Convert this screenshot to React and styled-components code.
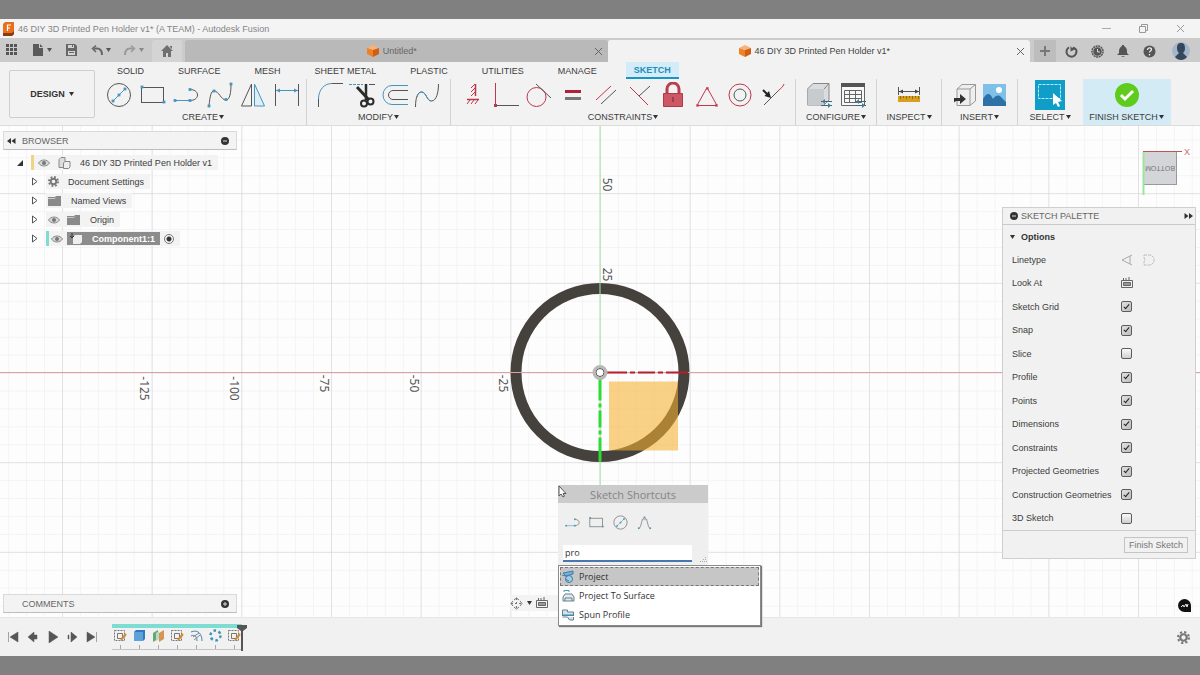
import React, { useState } from "react";
import styled, { createGlobalStyle, css } from "styled-components";

const BLUE = "#4794bd";
const DARK = "#555";
const RED = "#c0364a";

const GlobalStyle = createGlobalStyle`
  * {
    box-sizing: border-box;
  }
  body {
    margin: 0;
    background-color: #808080;
    font-family: "Liberation Sans", Arial, sans-serif;
    font-size: 9px;
    line-height: 12px;
    color: #3c3c3c;
  }
  button {
    padding: 0;
    border: 0;
    background: none;
    font: inherit;
    color: inherit;
    cursor: pointer;
  }
  svg {
    display: block;
    flex: none;
  }
`;

const Screen = styled.div`
  height: 100vh;
  padding: 19px 0;
  display: flex;
  flex-direction: column;
`;

const Row = styled.div`
  display: flex;
  align-items: center;
  gap: ${({ gap = 0 }) => gap}px;
`;

/* ---------- window title ---------- */

const TitleBar = styled.header`
  height: 19px;
  display: flex;
  align-items: center;
  justify-content: space-between;
  padding: 0 14px 0 2px;
  background-color: #f4f4f4;
  color: #858585;
  h1 {
    margin: 0;
    font-size: 9px;
    font-weight: normal;
  }
`;

const WindowButton = styled.button`
  width: 12px;
  height: 12px;
  display: grid;
  place-items: center;
`;

/* ---------- document tabs ---------- */

const TabBar = styled.div`
  height: 24px;
  display: flex;
  align-items: stretch;
  padding-top: 2px;
  background-color: #cbcbcb;
`;

const QuickAccess = styled.div`
  width: 152px;
  padding: 0 8px 2px 6px;
  display: flex;
  align-items: center;
  justify-content: space-between;
  button {
    display: flex;
    align-items: center;
    gap: 3px;
  }
`;

const HomeTab = styled.button`
  width: 30px;
  display: grid;
  place-items: center;
  margin-right: 3px;
  background-color: #d4d4d4;
  border-radius: 3px 3px 0 0;
`;

const DocTab = styled.div`
  flex: 1;
  display: flex;
  align-items: center;
  padding: 0 5px;
  border-radius: 3px 3px 0 0;
  background-color: ${({ active }) => (active ? "#f2f2f2" : "#b9b9b9")};
  color: ${({ active }) => (active ? "#444" : "#666")};
  button:first-child {
    flex: 1;
    display: flex;
    align-items: center;
    justify-content: center;
    gap: 4px;
  }
`;

const TabTools = styled.div`
  width: 170px;
  padding: 0 10px 0 4px;
  display: flex;
  align-items: center;
  button {
    width: 26px;
    height: 20px;
    display: grid;
    place-items: center;
  }
  button:first-child {
    width: 22px;
    height: 100%;
    margin-right: 2px;
    background-color: #bdbdbd;
  }
  button:last-child {
    width: 18px;
    margin-left: auto;
  }
`;

/* ---------- ribbon ---------- */

const Ribbon = styled.div`
  height: 64px;
  display: flex;
  background-color: #f2f2f2;
  border-bottom: 1px solid #dcdcdc;
`;

const DesignButton = styled.button`
  width: 86px;
  height: 48px;
  margin: 8px 5px 0 9px;
  display: flex;
  align-items: center;
  justify-content: center;
  gap: 4px;
  border: 1px solid #cfcfcf;
  border-radius: 2px;
  font-weight: bold;
  color: #333;
`;

const RibbonBody = styled.div`
  flex: 1;
  display: flex;
  flex-direction: column;
`;

const RibbonTabs = styled.nav`
  height: 17px;
  display: flex;
  gap: 24px;
  padding-left: 12px;
`;

const RibbonTab = styled.button`
  height: 17px;
  padding: 0 5px;
  ${({ active }) =>
    active &&
    css`
      padding: 0 8px;
      font-weight: bold;
      color: #1b8fbd;
      background-color: #d3ecf7;
      border-bottom: 2px solid #1795c3;
    `}
`;

const Groups = styled.div`
  flex: 1;
  display: flex;
`;

const Group = styled.section`
  width: ${({ width }) => width}px;
  height: 46px;
  padding: 0 ${({ pad = 10 }) => pad}px;
  border-right: 1px solid ${({ plain }) => (plain ? "transparent" : "#d2d2d2")};
  background-color: ${({ highlight }) => (highlight ? "#d3ebf5" : "transparent")};
  white-space: nowrap;
`;

const GroupIcons = styled.div`
  height: 32px;
  display: flex;
  align-items: center;
  justify-content: ${({ single }) => (single ? "center" : "space-between")};
`;

const GroupLabel = styled.button`
  width: 100%;
  height: 12px;
  display: flex;
  justify-content: center;
  align-items: center;
  gap: 1px;
`;

/* ---------- canvas ---------- */

const Workspace = styled.main`
  flex: 1;
  position: relative;
  z-index: 1;
  background-color: #fdfdfd;
`;

const Sketch = styled.svg`
  position: absolute;
  width: 100%;
  height: 100%;
`;

const SidePanel = styled.div`
  position: absolute;
  left: 3px;
  top: ${({ top }) => top};
  bottom: ${({ bottom }) => bottom};
  width: 234px;
`;

const PanelHeader = styled.div`
  height: 19px;
  display: flex;
  align-items: center;
  justify-content: space-between;
  padding: 0 7px 0 ${({ indent }) => indent}px;
  background-color: #f3f3f3;
  border: 1px solid #dadada;
  border-bottom-color: #bdbdbd;
  color: #666;
`;

const Tree = styled.ul`
  margin: 3px 0 0;
  padding: 0;
  list-style: none;
`;

const TreeRow = styled.li`
  height: 19px;
  display: flex;
  align-items: center;
  gap: 8px;
  padding-left: ${({ indent }) => indent}px;
`;

const TreeChip = styled.div`
  height: 15px;
  display: flex;
  align-items: center;
  gap: ${({ gap }) => gap}px;
  padding: 0 ${({ right = 6 }) => right}px 0 ${({ left = 2 }) => left}px;
  background-color: #f3f3f3;
  border-left: ${({ bar }) => (bar ? `3px solid ${bar}` : "0")};
`;

const Selected = styled.span`
  height: 13px;
  display: flex;
  align-items: center;
  gap: 9px;
  padding: 0 5px 0 2px;
  background-color: #8c8c8c;
  color: #fff;
  font-weight: bold;
`;

const ActiveRadio = styled.input`
  appearance: none;
  width: 10px;
  height: 10px;
  margin: 0;
  border: 1px solid #777;
  border-radius: 50%;
  background: radial-gradient(circle, #333 0 2px, #f8f8f8 3px);
`;

const Palette = styled.aside`
  position: absolute;
  right: 4px;
  top: 81px;
  width: 194px;
  background-color: #f1f1f1;
  border: 1px solid #cfcfcf;
`;

const PaletteHeader = styled.div`
  height: 17px;
  display: flex;
  align-items: center;
  gap: 3px;
  padding: 0 2px 0 7px;
  border-bottom: 1px solid #c9c9c9;
  color: #666;
  span {
    flex: 1;
  }
`;

const PaletteTitle = styled.button`
  height: 23px;
  display: flex;
  align-items: center;
  gap: 6px;
  padding-left: 7px;
  font-weight: bold;
  color: #333;
`;

const Options = styled.div`
  height: 282px;
  display: grid;
  grid-auto-rows: 1fr;
  padding-left: 9px;
`;

const Option = styled.div`
  display: grid;
  grid-template-columns: 109px 1fr;
  align-items: center;
`;

const Check = styled.input`
  appearance: none;
  width: 11px;
  height: 11px;
  margin: 0;
  display: grid;
  place-items: center;
  border: 1px solid #5c5c5c;
  border-radius: 2px;
  background: linear-gradient(#fafafa, #cfcfcf);
  &:checked {
    background: linear-gradient(135deg, #e2e2e2, #bdbdbd);
  }
  &:checked::after {
    content: "";
    width: 2px;
    height: 5px;
    margin-bottom: 2px;
    border: solid #222;
    border-width: 0 1px 1px 0;
    transform: rotate(40deg);
  }
`;

const PaletteFooter = styled.div`
  height: 28px;
  display: flex;
  align-items: center;
  justify-content: flex-end;
  padding-right: 7px;
  border-top: 1px solid #cdcdcd;
  button {
    height: 16px;
    padding: 0 4px;
    border: 1px solid #c4c4c4;
    color: #777;
  }
`;

const NavBar = styled.div`
  position: absolute;
  left: 50%;
  bottom: 6px;
  width: 180px;
  height: 16px;
  margin-left: -90px;
  display: flex;
  align-items: center;
  gap: 4px;
  background-color: #f3f3f3;
`;

const ChatBadge = styled.button`
  position: absolute;
  right: 9px;
  bottom: 5px;
`;

/* ---------- shortcuts popup ---------- */

const Shortcuts = styled.div`
  position: absolute;
  left: calc(50% - 42px);
  top: 359px;
  font-family: "Open Sans", sans-serif;
`;

const ShortcutBox = styled.div`
  width: 150px;
  height: 80px;
  background-color: #efefef;
  h2 {
    height: 18px;
    margin: 0;
    font-size: 11px;
    line-height: 19px;
    font-weight: normal;
    text-align: center;
    color: #858585;
    background-color: #cbcbcb;
  }
`;

const ShortcutIcons = styled.div`
  height: 38px;
  padding-left: 7px;
  display: flex;
  align-items: center;
  gap: 9px;
`;

const SearchRow = styled.div`
  display: flex;
  align-items: flex-end;
  padding: 4px 0 0 5px;
  gap: 8px;
`;

const SearchInput = styled.input`
  width: 129px;
  height: 17px;
  padding: 0 2px;
  border: 0;
  border-bottom: 2px solid #4a78ad;
  outline: 0;
  background-color: #fff;
  font-family: inherit;
  font-size: 9px;
  color: #333;
`;

const Results = styled.ul`
  width: 203px;
  margin: 0;
  padding: 1px;
  list-style: none;
  background-color: #fff;
  border: 1px solid #8a8a8a;
  box-shadow: 1px 1px 1px #777;
`;

const Result = styled.li`
  height: 19px;
  border: 1px ${({ active }) => (active ? "dashed #777" : "solid transparent")};
  background-color: ${({ active }) => (active ? "#c6c6c6" : "#fff")};
  button {
    width: 100%;
    height: 17px;
    display: flex;
    align-items: center;
    gap: 4px;
    color: #333;
  }
`;

const Pointer = styled.svg`
  position: absolute;
  left: 0;
  top: 0;
`;

/* ---------- timeline ---------- */

const Timeline = styled.footer`
  height: 39px;
  display: flex;
  align-items: center;
  padding: 0 10px 0 7px;
  background-color: #f1f1f1;
  border-top: 1px solid #e6e6e6;
`;

const Playback = styled.div`
  width: 91px;
  margin-right: 14px;
  display: flex;
  justify-content: space-between;
`;

const Track = styled.div`
  position: relative;
  width: 130px;
  height: 27px;
  border-top: 4px solid #7fdcd2;
`;

const Features = styled.div`
  height: 22px;
  display: flex;
  justify-content: space-between;
  border-bottom: 1px solid #c4c4c4;
`;

const Feature = styled.button`
  width: 16px;
  display: flex;
  flex-direction: column;
  align-items: center;
  justify-content: space-between;
  &::after {
    content: "";
    width: 1px;
    height: 4px;
    background-color: #a8a8a8;
  }
`;

const Marker = styled.svg`
  position: absolute;
  right: -5px;
  top: -3px;
`;

const Spacer = styled.div`
  flex: 1;
`;

/* ---------- icons ---------- */

const Ico = ({ s = 26, w, h, box, children, ...rest }) => (
  <svg
    width={w || s}
    height={h || s}
    viewBox={box || `0 0 ${w || s} ${h || s}`}
    fill="none"
    stroke={DARK}
    aria-hidden="true"
    {...rest}
  >
    {children}
  </svg>
);

const Caret = ({ color = "#333" }) => (
  <Ico w={5} h={4} stroke="none">
    <path d="M0 0h5L2.5 4z" fill={color} />
  </Ico>
);

const Dots = ({ at, r = 1.4 }) =>
  at.map(([x, y]) => (
    <rect key={`${x}-${y}`} x={x - r} y={y - r} width={r * 2} height={r * 2} fill={BLUE} stroke="none" />
  ));

const CircleIcon = ({ s }) => (
  <Ico s={s} box="0 0 26 26">
    <circle cx="13" cy="13" r="11.5" />
    <path d="M7 19 19 7" stroke={BLUE} />
    <Dots at={[[7, 19], [13, 13], [19, 7]]} />
  </Ico>
);
const RectIcon = ({ s }) => (
  <Ico s={s} box="0 0 26 26">
    <rect x="1.5" y="5.5" width="22" height="15" />
    <Dots at={[[2, 5], [24, 20]]} />
  </Ico>
);
const LineIcon = ({ s }) => (
  <Ico s={s} box="0 0 26 26">
    <path d="M1.500 18.500H17" stroke={BLUE} />
    <path d="M17 18.500c4 0 7.500-2 7.500-5.500S21 7.500 17 7.500" />
    <Dots at={[[2, 18.5], [17, 18.5], [17, 7.5]]} />
  </Ico>
);
const SplineIcon = () => (
  <Ico>
    <path d="M2 24C3 14 4 9 7 9c5 0 7 9 12 9 4 0 5-8 5-16" />
    <Dots at={[[2, 24], [7, 9], [19, 17.5], [24, 2]]} />
  </Ico>
);
const ArcIcon = ({ s }) => (
  <Ico s={s} box="0 0 26 26">
    <path d="M3 23c5 0 4-18 10-18s5 18 10 18" />
    <path d="M8 8h10" stroke="#999" />
    <Dots at={[[3, 23], [13, 4], [23, 23]]} />
  </Ico>
);
const MirrorIcon = () => (
  <Ico>
    <path d="M11.500 2v22H1.500z" />
    <path d="M14.500 2v22h10z" stroke={BLUE} fill="#ddeef6" />
  </Ico>
);
const DimensionIcon = () => (
  <Ico>
    <path d="M1.500 2v22M24.500 2v22" />
    <path d="M2 8.500h22" stroke={BLUE} />
    <path d="m2 8.500 4-2v4zM24 8.500l-4-2v4z" fill={BLUE} stroke="none" />
  </Ico>
);
const FilletIcon = () => (
  <Ico>
    <path d="M1.500 17C1.500 8 7 1.500 15 1.500" stroke={BLUE} />
    <path d="M1.500 25v-8M15 1.500h11" />
  </Ico>
);
const TrimIcon = () => (
  <Ico>
    <path d="M0 2.500h14" stroke={BLUE} strokeDasharray="3 1" />
    <path d="M20 2.500h6" />
    <g stroke="#2b2b2b">
      <path d="M8 5 20 18" strokeWidth="3" />
      <path d="M17 2v16" strokeWidth="2.500" />
      <circle cx="15" cy="21.500" r="3" strokeWidth="2" />
      <circle cx="21.500" cy="19.500" r="3" strokeWidth="2" />
    </g>
  </Ico>
);
const OffsetIcon = () => (
  <Ico stroke={BLUE}>
    <path d="M26 3.500H10a9 9.500 0 0 0 0 19h16" />
    <path d="M26 8.500H11a4.500 4.500 0 0 0 0 9h15" stroke={DARK} />
  </Ico>
);
const CurveIcon = () => (
  <Ico>
    <path d="M1.500 25c0-9 2-15 6-15 5 0 5 9 10 9 5 0 7-9 7-17" />
    <path d="M3 15c1-3 2-5 4.500-5 5 0 5 9 10 9" stroke={BLUE} />
  </Ico>
);
const FixHVIcon = () => (
  <Ico>
    <path d="M16.500 2v12M8 17.500h12" stroke={RED} strokeWidth="1.500" />
    <path d="m12 6 4-4M12 10l4-4M12 14l4-4M8 22l3-4M12 22l3-4M16 22l3-4" stroke={RED} />
  </Ico>
);
const PerpendicularIcon = () => (
  <Ico>
    <path d="M2.500 1v23" stroke={RED} />
    <path d="M3 23.500h23" />
    <rect x="1" y="22" width="3" height="3" fill={RED} stroke="none" />
  </Ico>
);
const TangentIcon = () => (
  <Ico>
    <circle cx="10.500" cy="15" r="9.500" stroke={RED} />
    <path d="m10 2 15 14" />
  </Ico>
);
const EqualIcon = () => (
  <Ico stroke="none">
    <path d="M5 8h16v3H5z" fill="#b01f3b" />
    <path d="M5 15h16v3H5z" fill="#777" />
  </Ico>
);
const ParallelIcon = () => (
  <Ico>
    <path d="M3 18 18 4" stroke={RED} />
    <path d="M8 22 23 8" />
  </Ico>
);
const VertexIcon = () => (
  <Ico>
    <path d="m3 5 18 18" stroke={RED} />
    <path d="M12 14 23 4" />
  </Ico>
);
const LockIcon = () => (
  <Ico stroke="none">
    <path d="M7 12V7a6 6 0 0 1 12 0v5" stroke="#b83f50" strokeWidth="3" fill="none" />
    <path d="M3.500 11.500h19v13h-19z" fill="#cc5865" stroke="#b33948" />
    <path d="M12.500 15h1v5h-1z" fill="#7c1f2c" />
  </Ico>
);
const TriangleIcon = () => (
  <Ico stroke={RED}>
    <path d="M13 5.500 3 23.500h20z" />
    <path d="M2 22h3v3H2zM21 22h3v3h-3zM12 5h3v3h-3z" fill={RED} stroke="none" opacity=".5" />
  </Ico>
);
const ConcentricIcon = () => (
  <Ico>
    <circle cx="13" cy="13" r="11" stroke={RED} />
    <circle cx="13" cy="13" r="6" />
  </Ico>
);
const CurvatureIcon = () => (
  <Ico>
    <path d="M3 23 17 9" />
    <path d="M17 9c3-3 5-4 6-7" stroke={RED} />
    <path d="m2 8 5 5" stroke="#222" strokeWidth="2" />
    <path d="M10 16 3.500 14 8 9z" fill="#222" stroke="none" />
  </Ico>
);
const Tune = () => (
  <>
    <path d="M15 19.500h11M15 23.500h11" stroke="#3f6573" />
    <path d="m19 17-3 2.500 3 2.500zM22 21l3 2.500-3 2.500z" fill="#3f7f96" stroke="none" />
  </>
);
const ConfigBoxIcon = () => (
  <Ico stroke="#888">
    <path d="M1.500 7 7 1.500h16V18l-5 5H1.500z" fill="#dcdcdc" />
    <path d="M1.500 7H18v16H1.500z" fill="#c8cbcd" stroke="none" />
    <path d="m18 7 5-5.500" />
    <Tune />
  </Ico>
);
const ConfigTableIcon = () => (
  <Ico stroke="#666">
    <path d="M1.500 1.500h23v22h-23z" fill="#f8f8f8" />
    <path d="M1 1h24v4H1z" fill="#555" stroke="none" />
    <path d="M4.500 8.500h17v12h-17zM4.500 12.500h17M4.500 16.500h17M9.500 9v11M15.500 9v11" />
    <Tune />
  </Ico>
);
const MeasureIcon = () => (
  <Ico>
    <path d="M2.500 5v8M23.500 5v8M3 9.500h20" />
    <path d="m3 9.500 4-2v4zM23 9.500l-4-2v4z" fill="#444" stroke="none" />
    <path d="M2 14h22v6H2z" fill="#d99f1d" stroke="none" />
    <path d="M4.500 17v-3M7.500 16v-2M10.500 17v-3M13.500 16v-2M16.500 17v-3M19.500 16v-2M22.500 17v-3" stroke="#8f6a17" />
  </Ico>
);
const InsertBoxIcon = () => (
  <Ico stroke="#999">
    <path d="m5 7 5-4.500h13.500V19L18 23.500H5z" fill="#eee" />
    <path d="M5 7h13v16M18 7l5.500-4.500" />
    <path d="M2 21v-5h6v-4l6 5-6 5v-3H5c-2 0-3 1-3 2z" fill="#333" stroke="none" />
  </Ico>
);
const ImageIcon = () => (
  <Ico stroke="none">
    <path d="M2 2h23v22H2z" fill="#7fc0e8" />
    <circle cx="18" cy="8" r="3" fill="#fff" />
    <path d="M2 17c4-7 7-6 10 0 2-3 5-5 8-2l5 5v4H2z" fill="#2c72a6" />
  </Ico>
);
const SelectIcon = () => (
  <Ico s={30} stroke="none">
    <path d="M0 0h30v30H0z" fill="#109dc7" />
    <path d="M3.500 4.500h22v14h-22z" stroke="#bfeaf7" strokeDasharray="3 1" />
    <path d="M18 13v12l3-2 2 4 2-1-2-4 4-1z" fill="#fff" />
  </Ico>
);
const FinishIcon = () => (
  <Ico stroke="none">
    <circle cx="13" cy="13" r="12" fill="#5fcb1c" />
    <path d="m7 13 4 4 8-8" stroke="#fff" strokeWidth="3" />
  </Ico>
);

const FusionLogo = () => (
  <Ico w={12} h={14} stroke="none">
    <path d="M1 2 3 0h9v12l-2 2H1z" fill="#e8701c" />
    <path d="M1 11h9l2-2v3l-2 2H1z" fill="#8c3b10" />
    <path d="M5 3h4M5 6h3M5.500 3v6" stroke="#fff" strokeWidth="1.200" />
  </Ico>
);
const CubeIcon = () => (
  <Ico s={12} stroke="none">
    <path d="M6 0 12 3 6 5 0 3z" fill="#f7b27a" />
    <path d="m0 3 6 2v7L0 9z" fill="#ef8226" />
    <path d="m12 3-6 2v7l6-3z" fill="#cf5f12" />
  </Ico>
);
const CloseIcon = ({ color = "#666" }) => (
  <Ico s={9} stroke={color}>
    <path d="m1 1 7 7M8 1 1 8" />
  </Ico>
);
const AppsIcon = () => (
  <Ico s={12} stroke="none">
    {[0, 4, 8].map(y =>
      [0, 4, 8].map(x => <rect key={`${x}${y}`} x={x} y={y} width="3" height="3" fill="#555" />)
    )}
  </Ico>
);
const FileIcon = () => (
  <Ico s={12} stroke="none">
    <path d="M1 0h6v4h4v8H1zM8 0l3 3H8z" fill="#5a5a5a" />
  </Ico>
);
const SaveIcon = () => (
  <Ico s={12} stroke="none">
    <path d="M1 0h9l2 2v10H1z" fill="#666" />
    <path d="M3 1h6v3H3zM3 7h7v4H3z" fill="#d4d4d4" />
    <path d="M7 1h1v2H7zM4 8h5v1H4z" fill="#666" />
  </Ico>
);
const UndoIcon = ({ flip }) => (
  <Ico s={12} stroke={flip ? "#999" : "#666"} transform={flip ? "scale(-1 1)" : undefined}>
    <path d="M3 4.500h3c3 0 5 2 5 6.500" strokeWidth="2" />
    <path d="M5 1.500 1.500 4.500 5 8" strokeWidth="1.500" />
  </Ico>
);
const HomeIcon = () => (
  <Ico s={12} stroke="none">
    <path d="M6 0 12 6h-2v6H7V8H5v4H2V6H0zM9 1h2v3L9 2z" fill="#707070" />
  </Ico>
);
const SyncIcon = () => (
  <Ico s={13} strokeWidth="2">
    <path d="M4 2.300a5 5 0 1 0 6 .8" />
    <path d="M5.500 1v5.500L11 4 9 1.500 7 3z" fill="#555" stroke="none" />
  </Ico>
);
const ClockIcon = () => (
  <Ico s={13} strokeWidth="1.500">
    <circle cx="6.500" cy="6.500" r="5.500" strokeDasharray="2 .6" />
    <circle cx="6.500" cy="6.500" r="3.500" fill="#555" />
    <path d="M6.500 4v3H9" stroke="#ddd" strokeWidth="1" />
  </Ico>
);
const BellIcon = () => (
  <Ico s={12} stroke="none">
    <path d="M5 0h2v1c2 1 3 3 3 5v2l2 2H0l2-2V6c0-2 1-4 3-5zM4 11h4l-2 1z" fill="#555" />
  </Ico>
);
const HelpIcon = () => (
  <Ico s={13} stroke="none">
    <circle cx="6.500" cy="6.500" r="6" fill="#555" />
    <path d="M4.500 5c0-3 4-2.500 4-.5 0 1.500-2 1.500-2 3M6.500 9v1.500" stroke="#eee" strokeWidth="1.300" />
  </Ico>
);
const AvatarIcon = () => (
  <Ico s={18} stroke="none">
    <circle cx="9" cy="9" r="9" fill="#a5b6ca" />
    <path d="M9 1c3 0 4 2 4 5s-1 4-2 5l4 4c-3 4-9 4-12 0l4-4C6 10 5 9 5 6s1-5 4-5z" fill="#34475d" />
  </Ico>
);

const EyeIcon = () => (
  <Ico w={12} h={8} stroke="#8a8a8a">
    <path d="M.5 4C3 0 9 0 11.500 4 9 8 3 8 .5 4z" fill="#d8d8d8" />
    <circle cx="6" cy="4" r="2" fill="#777" stroke="none" />
  </Ico>
);
const FolderIcon = () => (
  <Ico w={13} h={10} stroke="none">
    <path d="M0 1h7l1-1h5v10H0z" fill="#8a8a8a" />
    <path d="M0 2.500h7l1-1" stroke="#c8c8c8" />
  </Ico>
);
const GearIcon = ({ s = 11, fill = "#777" }) => (
  <Ico s={s} box="0 0 12 12" stroke={fill}>
    <circle cx="6" cy="6" r="3" strokeWidth="2" />
    <circle cx="6" cy="6" r="5" strokeWidth="2" strokeDasharray="2 1.930" />
  </Ico>
);
const DocIcon = () => (
  <Ico w={13} h={12} stroke="#888">
    <path d="M1 2.500 3 .5h4v10H1z" fill="#ddd" />
    <path d="M5.500 6 7 4.500h5V10l-1.500 1.500h-5z" fill="#eee" />
  </Ico>
);
const ComponentIcon = () => (
  <Ico w={14} h={12} stroke="none">
    <path d="m4 4 2-2h7v7l-2 2H4z" fill="#eee" />
    <path d="M3 0v5M1 3l2 2 2-2" stroke="#333" />
  </Ico>
);
const ArrowRight = () => (
  <Ico w={6} h={9}>
    <path d="M.5 1v7L5 4.500z" />
  </Ico>
);
const ArrowOpen = () => (
  <Ico s={6} stroke="none">
    <path d="M6 0v6H0z" fill="#333" />
  </Ico>
);
const RoundIcon = ({ plus }) => (
  <Ico s={8} stroke="none">
    <circle cx="4" cy="4" r="4" fill="#333" />
    <path d={plus ? "M2 4h4M4 2v4" : "M2 4h4"} stroke="#ddd" />
  </Ico>
);
const DoubleArrow = ({ right }) => (
  <Ico w={9} h={6} stroke="none" transform={right ? "scale(-1 1)" : undefined}>
    <path d="M0 3 4 0v6zM4.500 3l4-3v6z" fill="#333" />
  </Ico>
);
const LookAtIcon = () => (
  <Ico s={12} stroke="#666">
    <path d="M.5 3.500h11v7H.5zM8 0v3M5 1v2M2.500 1v2" />
    <path d="M2.500 5.500h7v3h-7z" fill="#999" />
  </Ico>
);

const ProjectIcon = () => (
  <Ico s={14} stroke="#3d7dad">
    <path d="M2 3 12 1v3L5 6zM1 5l7 2" fill="#78aed6" />
    <circle cx="8" cy="9" r="3.500" fill="#a7cbe4" />
    <path d="m4 9 4 2" />
  </Ico>
);
const SurfaceIcon = () => (
  <Ico s={14} stroke="#68818f">
    <path d="M2 12V8l2-3h7l2 3v4zM4 9h7M4 9v3M11 9v3" fill="#e3e9ec" />
    <path d="M3 3V1.500h5V3" stroke="#4b9cb3" />
  </Ico>
);
const SpunIcon = () => (
  <Ico s={14} stroke="#68818f">
    <path d="M1.500 2h5v2h6v3H1.500zM1.500 9h5l2 3h4V9" fill="#cfe4ec" />
    <path d="M1 7.500h12" stroke="#2f95a8" />
  </Ico>
);

const SketchFeature = () => (
  <Ico s={15} stroke="#777">
    <path d="M1.500 2.500h10v10h-10z" strokeDasharray="2 1" />
    <path d="M4.500 5.500h5v5h-5z" />
    <path d="m8 12 5-6" stroke="#d28b2c" strokeWidth="2" />
  </Ico>
);
const ExtrudeFeature = () => (
  <Ico s={15} stroke="none">
    <path d="m2 4 2-2h9v9l-2 2H2z" fill="#3379bd" />
    <path d="M2 4h9v9H2z" fill="#5ea2dc" />
  </Ico>
);
const PlaneFeature = () => (
  <Ico s={15} stroke="none">
    <path d="m2 5 5-3v9l-5 3z" fill="#62a978" />
    <path d="m8 5 5-3v9l-5 3z" fill="#d99355" />
    <path d="m5 5 3-2v8l-3 2z" fill="#b7dcc2" />
  </Ico>
);
const SweepFeature = () => (
  <Ico s={15} stroke="#4583ae">
    <path d="M2 4c7-3 11 2 11 9M2 8c4-2 6 1 6 5" />
    <path d="m4 9 6-4M5 12l6-5" stroke="#888" />
  </Ico>
);
const PatternFeature = () => (
  <Ico s={15} stroke="#3f95b8" strokeWidth="2.500">
    <circle cx="7.500" cy="7.500" r="5" strokeDasharray="2.600 2.630" />
  </Ico>
);

/* ---------- data ---------- */

const ribbonTabs = ["SOLID", "SURFACE", "MESH", "SHEET METAL", "PLASTIC", "UTILITIES", "MANAGE", "SKETCH"];

const groups = [
  { label: "CREATE", width: 207, pad: 6, icons: [CircleIcon, RectIcon, LineIcon, SplineIcon, MirrorIcon, DimensionIcon] },
  { label: "MODIFY", width: 144, icons: [FilletIcon, TrimIcon, OffsetIcon, CurveIcon] },
  {
    label: "CONSTRAINTS",
    width: 345,
    pad: 8,
    icons: [
      FixHVIcon,
      PerpendicularIcon,
      TangentIcon,
      EqualIcon,
      ParallelIcon,
      VertexIcon,
      LockIcon,
      TriangleIcon,
      ConcentricIcon,
      CurvatureIcon
    ]
  },
  { label: "CONFIGURE", width: 81, icons: [ConfigBoxIcon, ConfigTableIcon] },
  { label: "INSPECT", width: 65, icons: [MeasureIcon] },
  { label: "INSERT", width: 76, icons: [InsertBoxIcon, ImageIcon] },
  { label: "SELECT", width: 65, plain: 1, icons: [SelectIcon] },
  { label: "FINISH SKETCH", width: 88, pad: 0, plain: 1, highlight: 1, icons: [FinishIcon] }
];

const paletteOptions = [
  ["Sketch Grid", true],
  ["Snap", true],
  ["Slice", false],
  ["Profile", true],
  ["Points", true],
  ["Dimensions", true],
  ["Constraints", true],
  ["Projected Geometries", true],
  ["Construction Geometries", true],
  ["3D Sketch", false]
];

const results = [
  ["Project", ProjectIcon],
  ["Project To Surface", SurfaceIcon],
  ["Spun Profile", SpunIcon]
];

const features = [
  SketchFeature,
  ExtrudeFeature,
  PlaneFeature,
  SketchFeature,
  SweepFeature,
  PatternFeature,
  SketchFeature
];

const playback = [
  ["First", "M1.500 1v10M11 1v10L3 6z"],
  ["Previous", "M1 6l6-5v10zM7 4h3v4H7z"],
  ["Play", "M2 0v12l9-6z"],
  ["Next", "M11 6 5 1v10zM2 4h1v4H2z"],
  ["Last", "M10.500 1v10M1 1v10l8-5z"]
];

const rulerLabels = [
  [-460, 16, "-125"],
  [-370, 16, "-100"],
  [-280, 11, "-75"],
  [-190, 11, "-50"],
  [-101, 11, "-25"],
  [3, -188, "50"],
  [3, -98, "25"]
];

/* ---------- sketch drawing, origin at the centre of the ring ---------- */

const STEP = 89.67;

const SketchCanvas = () => (
  <Sketch>
    <defs>
      <pattern id="minor" width={STEP / 5} height={STEP / 5} patternUnits="userSpaceOnUse">
        <path d={`M0 0H${STEP}M0 0V${STEP}`} stroke="#ececec" fill="none" />
      </pattern>
      <pattern id="major" width={STEP} height={STEP} patternUnits="userSpaceOnUse">
        <path d={`M0 0H${STEP}M0 0V${STEP}`} stroke="#d0d0d0" fill="none" />
      </pattern>
    </defs>
    <svg x="50%" y="246.5" overflow="visible">
      <rect x="-2000" y="-1000" width="4000" height="2000" fill="url(#minor)" />
      <rect x="-2000" y="-1000" width="4000" height="2000" fill="url(#major)" />
      <circle r="84" fill="none" stroke="#45413d" strokeWidth="11" />
      <path d="M-2000 0H2000" stroke="#dda0a4" />
      <path d="M0-1000V120" stroke="#a6e3ab" />
      <rect x="9" y="9" width="69" height="69" fill="#f5b030" fillOpacity=".58" />
      <path d="M6 0h21m3 0h5m3 0h17m3 0h5m3 0h22" stroke="#b81f2b" strokeWidth="2" />
      <path d="M0 6v22m0 3v4m0 3v17m0 3v4m0 3v24" stroke="#2ddb35" strokeWidth="3" />
      <circle r="6" fill="#fff" stroke="#b9b9b9" strokeWidth="3" />
      <circle r="4" fill="#fff" stroke="#555" />
      <g fontSize="12" fill="#555" textAnchor="middle" fontFamily="Noto Sans">
        {rulerLabels.map(([x, y, label]) => (
          <text key={label} transform={`translate(${x} ${y}) rotate(90)`}>
            {label}
          </text>
        ))}
      </g>
    </svg>
    <svg x="100%" overflow="visible">
      <rect x="-56.5" y="25.5" width="33" height="33" fill="#d3d5d8" stroke="#999" />
      <path d="M-57 25.500h39" stroke="#bd5555" />
      <path d="M-56.500 26v43" stroke="#9be59f" strokeWidth="2" />
      <text transform="translate(-40 40) rotate(180)" fontSize="7" textAnchor="middle" fill="#777">
        BOTTOM
      </text>
      <text x="-16" y="29" fontSize="9" fill="#cf6b78">
        X
      </text>
    </svg>
  </Sketch>
);

const TreeItem = ({ indent, open, children }) => (
  <TreeRow indent={indent}>
    {open ? <ArrowOpen /> : <ArrowRight />}
    {children}
  </TreeRow>
);

const Browser = () => (
  <SidePanel top="5px">
    <PanelHeader indent={3}>
      <Row gap={6}>
        <DoubleArrow />
        BROWSER
      </Row>
      <RoundIcon />
    </PanelHeader>
    <Tree>
      <TreeItem indent={14} open>
        <TreeChip bar="#f0d480" gap={9} left={4}>
          <Row gap={8}>
            <EyeIcon />
            <DocIcon />
          </Row>
          46 DIY 3D Printed Pen Holder v1
        </TreeChip>
      </TreeItem>
      <TreeItem indent={29}>
        <TreeChip gap={9}>
          <GearIcon />
          Document Settings
        </TreeChip>
      </TreeItem>
      <TreeItem indent={29}>
        <TreeChip gap={10}>
          <FolderIcon />
          Named Views
        </TreeChip>
      </TreeItem>
      <TreeItem indent={29}>
        <TreeChip gap={10}>
          <Row gap={7}>
            <EyeIcon />
            <FolderIcon />
          </Row>
          Origin
        </TreeChip>
      </TreeItem>
      <TreeItem indent={29}>
        <TreeChip bar="#7fdcd2" gap={4}>
          <EyeIcon />
          <Selected>
            <ComponentIcon />
            Component1:1
          </Selected>
          <ActiveRadio type="radio" defaultChecked aria-label="Activate Component1:1" />
        </TreeChip>
      </TreeItem>
    </Tree>
  </SidePanel>
);

const SketchPalette = () => (
  <Palette>
    <PaletteHeader>
      <RoundIcon />
      <span>SKETCH PALETTE</span>
      <DoubleArrow right />
    </PaletteHeader>
    <PaletteTitle>
      <Caret />
      Options
    </PaletteTitle>
    <Options>
      <Option>
        Linetype
        <Row gap={10}>
          <Ico s={12} stroke="#aaa">
            <path d="M11 1 1 6l10 5M9 2v8" />
          </Ico>
          <Ico s={12} stroke="#bbb" strokeDasharray="3 1">
            <path d="M1 1h7l3 3v4l-3 3H1V8l1-2-1-2z" />
          </Ico>
        </Row>
      </Option>
      <Option>
        Look At
        <LookAtIcon />
      </Option>
      {paletteOptions.map(([label, checked]) => (
        <Option as="label" key={label}>
          {label}
          <Check type="checkbox" defaultChecked={checked} />
        </Option>
      ))}
    </Options>
    <PaletteFooter>
      <button>Finish Sketch</button>
    </PaletteFooter>
  </Palette>
);

const SketchShortcuts = () => {
  const [query, setQuery] = useState("pro");
  return (
    <Shortcuts>
      <ShortcutBox>
        <h2>Sketch Shortcuts</h2>
        <ShortcutIcons>
          <LineIcon s={15} />
          <RectIcon s={15} />
          <CircleIcon s={15} />
          <ArcIcon s={15} />
        </ShortcutIcons>
        <SearchRow>
          <SearchInput
            aria-label="Search shortcuts"
            value={query}
            onChange={e => setQuery(e.target.value)}
          />
          <Ico s={7} stroke="#aaa" strokeDasharray="1 1">
            <path d="M0 6.500h7M3 4.500h4M5 2.500h2" />
          </Ico>
        </SearchRow>
      </ShortcutBox>
      <Results>
        {results.map(([label, Icon], i) => (
          <Result key={label} active={i === 0 ? 1 : undefined}>
            <button>
              <Icon />
              {label}
            </button>
          </Result>
        ))}
      </Results>
      <Pointer width="9" height="13" viewBox="0 0 9 13">
        <path d="M1 1v10l2-2 2 3 1.500-.8L5 8.500h3z" fill="#fff" stroke="#555" />
      </Pointer>
    </Shortcuts>
  );
};

export default function App() {
  return (
    <>
      <GlobalStyle />
      <Screen>
        <TitleBar>
          <Row gap={4}>
            <FusionLogo />
            <h1>46 DIY 3D Printed Pen Holder v1* (A TEAM) - Autodesk Fusion</h1>
          </Row>
          <Row gap={25}>
            <WindowButton aria-label="Minimize">
              <Ico s={9} stroke="#aaa">
                <path d="M0 4.500h9" />
              </Ico>
            </WindowButton>
            <WindowButton aria-label="Restore">
              <Ico s={9} stroke="#999">
                <path d="M.5 2.500h6v6h-6zM2.500 2V.5h6v6H7" />
              </Ico>
            </WindowButton>
            <WindowButton aria-label="Close">
              <CloseIcon color="#999" />
            </WindowButton>
          </Row>
        </TitleBar>

        <TabBar>
          <QuickAccess>
            <button aria-label="Data panel">
              <AppsIcon />
            </button>
            <button aria-label="File">
              <FileIcon />
              <Caret color="#555" />
            </button>
            <button aria-label="Save">
              <SaveIcon />
            </button>
            <button aria-label="Undo">
              <UndoIcon />
              <Caret color="#555" />
            </button>
            <button aria-label="Redo">
              <UndoIcon flip />
              <Caret color="#888" />
            </button>
          </QuickAccess>
          <HomeTab aria-label="Home">
            <HomeIcon />
          </HomeTab>
          <DocTab>
            <button>
              <CubeIcon />
              Untitled*
            </button>
            <button aria-label="Close tab">
              <CloseIcon />
            </button>
          </DocTab>
          <DocTab active={1}>
            <button>
              <CubeIcon />
              46 DIY 3D Printed Pen Holder v1*
            </button>
            <button aria-label="Close tab">
              <CloseIcon />
            </button>
          </DocTab>
          <TabTools>
            <button aria-label="New tab">
              <Ico s={10} strokeWidth="2" stroke="#777">
                <path d="M5 0v10M0 5h10" />
              </Ico>
            </button>
            <button aria-label="Job status">
              <SyncIcon />
            </button>
            <button aria-label="Extensions">
              <ClockIcon />
            </button>
            <button aria-label="Notifications">
              <BellIcon />
            </button>
            <button aria-label="Help">
              <HelpIcon />
            </button>
            <button aria-label="Account">
              <AvatarIcon />
            </button>
          </TabTools>
        </TabBar>

        <Ribbon>
          <DesignButton>
            DESIGN
            <Caret />
          </DesignButton>
          <RibbonBody>
            <RibbonTabs>
              {ribbonTabs.map(tab => (
                <RibbonTab key={tab} active={tab === "SKETCH" ? 1 : undefined}>
                  {tab}
                </RibbonTab>
              ))}
            </RibbonTabs>
            <Groups>
              {groups.map(({ label, icons, ...rest }) => (
                <Group key={label} {...rest}>
                  <GroupIcons single={icons.length === 1 ? 1 : undefined}>
                    {icons.map((Icon, i) => (
                      <button key={i} aria-label={`${label} ${i + 1}`}>
                        <Icon />
                      </button>
                    ))}
                  </GroupIcons>
                  <GroupLabel>
                    {label}
                    <Caret />
                  </GroupLabel>
                </Group>
              ))}
            </Groups>
          </RibbonBody>
        </Ribbon>

        <Workspace>
          <SketchCanvas />
          <Browser />
          <SidePanel bottom="4px">
            <PanelHeader indent={18}>
              COMMENTS
              <RoundIcon plus />
            </PanelHeader>
          </SidePanel>
          <SketchPalette />
          <NavBar>
            <Ico s={13} stroke="#777">
              <path d="M6.500 1v11M1 6.500h11" strokeDasharray="2 2" />
              <path d="m4 3 2.500-2L9 3M4 10l2.500 2L9 10M3 4 1 6.500 3 9M10 4l2 2.500L10 9" />
            </Ico>
            <Caret />
            <LookAtIcon />
          </NavBar>
          <SketchShortcuts />
          <ChatBadge aria-label="Assistant">
            <Ico s={13} stroke="none">
              <path d="M6.500 0a6.500 6.500 0 0 1 6.500 6.500V13H6.500a6.500 6.500 0 0 1 0-13z" fill="#111" />
              <path d="m3 8 2-2 1 2 2-3 1 3 1-3" stroke="#eee" />
            </Ico>
          </ChatBadge>
        </Workspace>

        <Timeline>
          <Playback>
            {playback.map(([label, d]) => (
              <button key={label} aria-label={label}>
                <Ico s={12}>
                  <path d={d} fill="#555" strokeWidth=".5" />
                </Ico>
              </button>
            ))}
          </Playback>
          <Track>
            <Features>
              {features.map((Icon, i) => (
                <Feature key={i} aria-label={`Feature ${i + 1}`}>
                  <Icon />
                </Feature>
              ))}
            </Features>
            <Marker width="10" height="26" viewBox="0 0 10 26">
              <path d="M0 0h10v3L6 6v20H4V6L0 3z" fill="#555" />
            </Marker>
          </Track>
          <Spacer />
          <button aria-label="Timeline settings">
            <GearIcon s={13} />
          </button>
        </Timeline>
      </Screen>
    </>
  );
}
